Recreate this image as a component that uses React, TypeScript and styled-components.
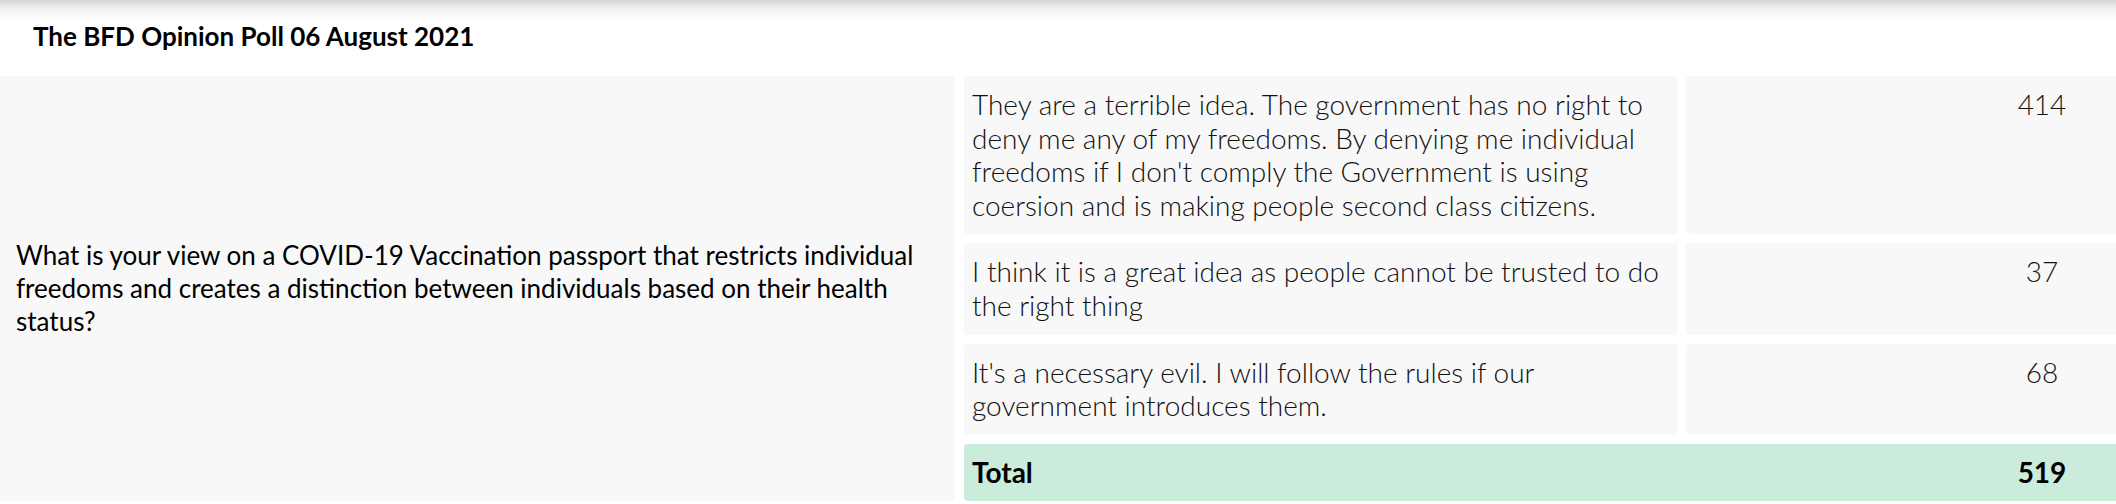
import React from "react";
import styled, { createGlobalStyle } from "styled-components";

const Global = createGlobalStyle`
  html, body { margin: 0; padding: 0; background: #ffffff; }
  body { overflow: hidden; width: 2116px; height: 504px; font-family: Lato, "Open Sans", sans-serif; color: #111; }
`;

const Page = styled.div`
  width: 2116px;
  height: 504px;
  overflow: hidden;
  display: flex;
  flex-direction: column;
`;

const Header = styled.header`
  height: 76px;
  flex: none;
  display: flex;
  align-items: center;
  padding: 0 0 4px 33px;
  box-sizing: border-box;
  background: linear-gradient(to bottom, #d6d6d6 0px, #efefef 8px, #ffffff 20px);
`;

const Title = styled.h1`
  margin: 0;
  font-family: Lato, sans-serif;
  font-weight: 700;
  font-size: 26px;
  color: #000;
`;

const Body = styled.div`
  display: flex;
  gap: 9px;
  width: 2398px;
`;

const Question = styled.div`
  width: 955px;
  flex: none;
  box-sizing: border-box;
  padding: 0 16px;
  background: #f8f8f8;
  border-radius: 0 4px 4px 0;
  display: flex;
  align-items: center;
  font-weight: 400;
  font-size: 26px;
  line-height: 33px;
  color: #000;
`;

const Answers = styled.div`
  display: flex;
  flex-direction: column;
  gap: 9px;
`;

const Row = styled.div`
  display: grid;
  grid-template-columns: 714px 712px;
  gap: 8px;
`;

const Cell = styled.div<{ $center?: boolean }>`
  background: #f8f8f8;
  border-radius: 4px;
  padding: 12px 8px;
  font-weight: 300;
  font-size: 28px;
  line-height: 33.6px;
  color: #111;
  text-align: ${(p) => (p.$center ? "center" : "left")};
`;

const TotalRow = styled.div`
  display: grid;
  grid-template-columns: 714px 712px;
  gap: 8px;
  background: #cbecda;
  border-radius: 4px;
`;

const TotalCell = styled.div<{ $center?: boolean }>`
  padding: 12px 8px;
  font-weight: 700;
  font-size: 28px;
  line-height: 33.6px;
  color: #000;
  text-align: ${(p) => (p.$center ? "center" : "left")};
`;

const answers = [
  {
    text: "They are a terrible idea. The government has no right to deny me any of my freedoms. By denying me individual freedoms if I don't comply the Government is using coersion and is making people second class citizens.",
    count: 414,
  },
  { text: "I think it is a great idea as people cannot be trusted to do the right thing", count: 37 },
  { text: "It's a necessary evil. I will follow the rules if our government introduces them.", count: 68 },
];

export default function App() {
  const total = answers.reduce((s, a) => s + a.count, 0);
  return (
    <Page>
      <Global />
      <Header>
        <Title>The BFD Opinion Poll 06 August 2021</Title>
      </Header>
      <Body>
        <Question>
          What is your view on a COVID-19 Vaccination passport that restricts individual freedoms and creates a
          distinction between individuals based on their health status?
        </Question>
        <Answers>
          {answers.map((a) => (
            <Row key={a.count}>
              <Cell>{a.text}</Cell>
              <Cell $center>{a.count}</Cell>
            </Row>
          ))}
          <TotalRow>
            <TotalCell>Total</TotalCell>
            <TotalCell $center>{total}</TotalCell>
          </TotalRow>
        </Answers>
      </Body>
    </Page>
  );
}
